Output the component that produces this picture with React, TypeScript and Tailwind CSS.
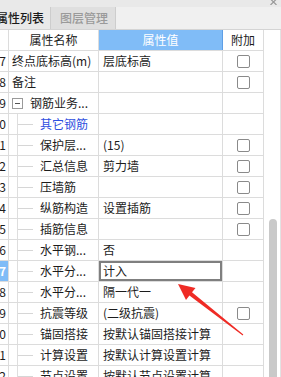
import React from "react";

type Row = {
  no: number;
  name: string;
  value?: string;
  level: 0 | 1 | 2; // 0 = top, 1 = group, 2 = child
  check?: boolean;
  blue?: boolean;
};

const rows: Row[] = [
  { no: 7, name: "终点底标高(m)", value: "层底标高", level: 0, check: true },
  { no: 8, name: "备注", level: 0, check: true },
  { no: 9, name: "钢筋业务...", level: 1 },
  { no: 10, name: "其它钢筋", level: 2, blue: true },
  { no: 11, name: "保护层...", value: "(15)", level: 2, check: true },
  { no: 12, name: "汇总信息", value: "剪力墙", level: 2, check: true },
  { no: 13, name: "压墙筋", level: 2, check: true },
  { no: 14, name: "纵筋构造", value: "设置插筋", level: 2, check: true },
  { no: 15, name: "插筋信息", level: 2, check: true },
  { no: 16, name: "水平钢...", value: "否", level: 2 },
  { no: 17, name: "水平分...", value: "计入", level: 2 },
  { no: 18, name: "水平分...", value: "隔一代一", level: 2 },
  { no: 19, name: "抗震等级", value: "(二级抗震)", level: 2, check: true },
  { no: 20, name: "锚固搭接", value: "按默认锚固搭接计算", level: 2 },
  { no: 21, name: "计算设置", value: "按默认计算设置计算", level: 2 },
  { no: 22, name: "节点设置", value: "按默认节点设置计算", level: 2 },
];

const SELECTED = 17;

function Checkbox() {
  return <span className="block h-[13px] w-[13px] rounded-[2px] border border-[#8a8a8a] bg-white" />;
}

function NameCell({ row }: { row: Row }) {
  if (row.level === 0) {
    return <span className="pl-[3px] whitespace-nowrap">{row.name}</span>;
  }
  if (row.level === 1) {
    return (
      <div className="flex h-full items-center">
        <div className="ml-[3px] flex h-[11px] w-[11px] items-center justify-center border border-[#9a9a9a] bg-white">
          <span className="block h-px w-[5px] bg-[#555]" />
        </div>
        <span className="ml-[7px] whitespace-nowrap">{row.name}</span>
      </div>
    );
  }
  return (
    <div className="flex h-full items-center">
      <div className="ml-[8px] flex h-full w-[16px] items-center border-l border-[#dedede]">
        <span className="block h-px w-full bg-[#d6d6d6]" />
      </div>
      <span className={`ml-[7px] whitespace-nowrap ${row.blue ? "text-[#2f4fe0]" : ""}`}>{row.name}</span>
    </div>
  );
}

export default function App() {
  return (
    <div
      className="relative h-[377px] w-[281px] overflow-hidden bg-white text-[12px] text-[#1c1c1c]"
      style={{ fontFamily: '"Noto Sans CJK SC", "Noto Sans", sans-serif' }}
    >
      {/* title strip */}
      <div className="flex h-[7px] justify-end bg-[#e9e9e9] pr-[4px]">
        <svg width="7" height="6" viewBox="0 0 7 6" className="-mt-px">
          <path d="M0.5 0 L6.5 6 M6.5 0 L0.5 6" stroke="#9a9a9a" strokeWidth="1.2" />
        </svg>
      </div>

      {/* tabs */}
      <div className="flex h-[23px] border-b border-[#d4d4d4] bg-[#f0f0f0] leading-none">
        <div className="flex w-[51px] items-center overflow-hidden border-r border-[#cdcdcd] bg-[#e9e9e9]">
          <span className="-ml-[4px] whitespace-nowrap font-medium text-[#1a1a1a]">属性列表</span>
        </div>
        <div className="flex w-[65px] items-center border-r border-[#cdcdcd] bg-[#dfdfdf] pl-[9px]">
          <span className="whitespace-nowrap font-medium text-[#9a9a9a]">图层管理</span>
        </div>
      </div>

      <div className="flex">
        {/* table */}
        <div className="w-[264px] leading-none">
          {/* header */}
          <div className="flex h-[21px] border-b border-[#dcdcdc]">
            <div className="w-[9px] border-r border-[#dcdcdc]" />
            <div className="flex w-[90px] items-center justify-center border-r border-[#dcdcdc]">属性名称</div>
            <div className="flex w-[124px] items-center justify-center border-r border-[#5e9fe6] bg-[#80bcf7] text-white">
              属性值
            </div>
            <div className="flex w-[41px] items-center justify-center border-r border-[#dcdcdc]">附加</div>
          </div>

          {rows.map((row) => {
            const sel = row.no === SELECTED;
            return (
              <div key={row.no} className="flex h-[21px] border-b border-[#dcdcdc]">
                <div
                  className={`flex w-[9px] items-center justify-end overflow-hidden border-r border-[#dcdcdc] pr-[2px] ${
                    sel ? "bg-[#80bcf7] font-bold text-white" : ""
                  }`}
                >
                  <span className="whitespace-nowrap">{row.no}</span>
                </div>
                <div className="flex w-[90px] items-center overflow-hidden border-r border-[#dcdcdc]">
                  <NameCell row={row} />
                </div>
                <div
                  className={`flex w-[124px] items-center overflow-hidden border-r border-[#dcdcdc] pl-[4px] ${
                    sel ? "shadow-[inset_0_0_0_2px_#7f7f7f]" : ""
                  }`}
                >
                  <span className="whitespace-nowrap">{row.value}</span>
                </div>
                <div className="flex w-[41px] items-center justify-center border-r border-[#dcdcdc]">
                  {row.check && <Checkbox />}
                </div>
              </div>
            );
          })}
        </div>

        {/* scrollbar */}
        <div className="w-[17px] border-r border-[#e2e2e2] bg-white pl-[5px]">
          <div className="mt-[189px] h-[200px] w-[8px] rounded-t-[4px] bg-[#c9c9c9]" />
        </div>
      </div>

      {/* red annotation arrow */}
      <svg className="pointer-events-none absolute left-0 top-0" width="281" height="377" viewBox="0 0 281 377">
        <polygon
          points="178,284 195.5,288 192,292.3 243.3,334.6 242.7,335.4 189.4,295.5 186,300"
          fill="#ef2b25"
        />
      </svg>
    </div>
  );
}
